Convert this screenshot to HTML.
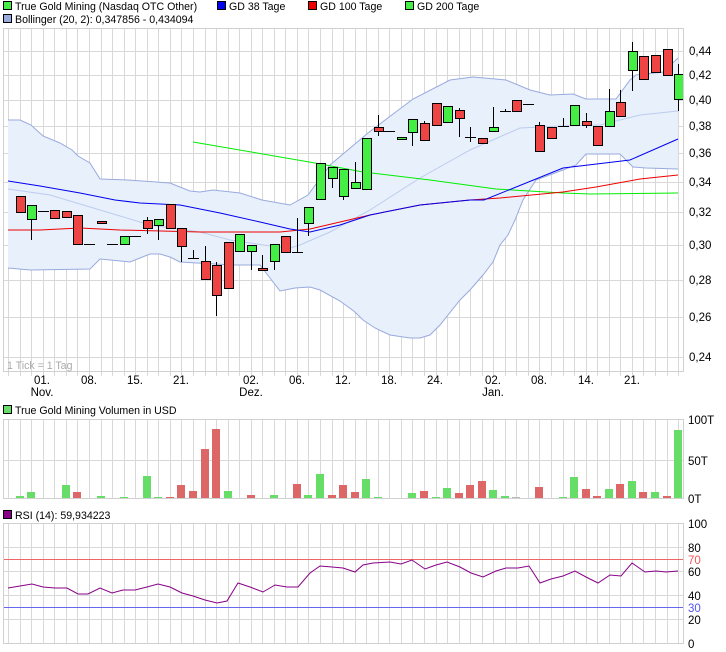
<!DOCTYPE html>
<html><head><meta charset="utf-8"><style>
html,body{margin:0;padding:0;background:#fff;width:726px;height:652px;overflow:hidden}
svg{display:block}
text{font-family:"Liberation Sans",sans-serif;font-size:11.5px;fill:#000}
text.lg{font-size:10.6px}
</style></head><body>
<svg id="s" width="726" height="652" viewBox="0 0 726 652" xmlns="http://www.w3.org/2000/svg">
<g id="grid" stroke="#d8d8d8" stroke-width="1" fill="none"></g>
<g id="ind"></g>
<g id="cand"></g>
<g id="vol"></g>
<g id="rsi"></g>
<rect x="3.5" y="28.5" width="680" height="343" fill="none" stroke="#d0d0d0"/>
<rect x="3.5" y="419.5" width="680" height="79" fill="none" stroke="#d0d0d0"/>
<rect x="3.5" y="523.5" width="680" height="120" fill="none" stroke="#d0d0d0"/>
<!-- legend -->
<rect x="3.5" y="1.5" width="8" height="8" fill="#44ee44" stroke="#000"/>
<text class="lg" x="15" y="10">True Gold Mining (Nasdaq OTC Other)</text>
<rect x="217.5" y="1.5" width="8" height="8" fill="#0000ee" stroke="#000"/>
<text class="lg" x="229" y="10">GD 38 Tage</text>
<rect x="308.5" y="1.5" width="8" height="8" fill="#ee0000" stroke="#000"/>
<text class="lg" x="320" y="10">GD 100 Tage</text>
<rect x="405.5" y="1.5" width="8" height="8" fill="#44ee44" stroke="#000"/>
<text class="lg" x="417" y="10">GD 200 Tage</text>
<rect x="3.5" y="14.5" width="8" height="8" fill="#99aadd" stroke="#000"/>
<text class="lg" x="15" y="23">Bollinger (20, 2): 0,347856 - 0,434094</text>
<text class="lg" x="7" y="369" style="fill:#aaa">1 Tick = 1 Tag</text>
<g>
<text x="689" y="55">0,44</text><text x="689" y="79">0,42</text><text x="689" y="104">0,40</text>
<text x="689" y="130">0,38</text><text x="689" y="157">0,36</text><text x="689" y="186">0,34</text>
<text x="689" y="216">0,32</text><text x="689" y="249">0,30</text><text x="689" y="284">0,28</text>
<text x="689" y="321">0,26</text><text x="689" y="361">0,24</text>
</g>
<g text-anchor="middle">
<text x="42" y="384">01.</text><text x="42" y="396">Nov.</text>
<text x="89" y="384">08.</text><text x="135" y="384">15.</text><text x="181" y="384">21.</text>
<text x="251" y="384">02.</text><text x="251" y="396">Dez.</text>
<text x="297" y="384">06.</text><text x="343" y="384">12.</text><text x="389" y="384">18.</text>
<text x="435" y="384">24.</text><text x="493" y="384">02.</text><text x="493" y="396">Jan.</text>
<text x="539" y="384">08.</text><text x="586" y="384">14.</text><text x="632" y="384">21.</text>
</g>
<rect x="3.5" y="405.5" width="8" height="8" fill="#66dd66" stroke="#000"/>
<text class="lg" x="15" y="414">True Gold Mining Volumen in USD</text>
<text x="688" y="424">100T</text><text x="688" y="465">50T</text><text x="688" y="503">0T</text>
<rect x="3.5" y="510.5" width="8" height="8" fill="#880088" stroke="#000"/>
<text class="lg" x="15" y="519">RSI (14): 59,934223</text>
<text x="688" y="528">100</text><text x="688" y="552">80</text><text x="688" y="564" style="fill:#ee5555">70</text>
<text x="688" y="576">60</text><text x="688" y="600">40</text><text x="688" y="612" style="fill:#5555ee">30</text>
<text x="688" y="624">20</text><text x="688" y="648">0</text>
</svg>
<script>
var NS="http://www.w3.org/2000/svg";
function el(p,t,a){var e=document.createElementNS(NS,t);for(var k in a)e.setAttribute(k,a[k]);document.getElementById(p).appendChild(e);return e;}
var g="grid";
for(var j=0;j<=58;j++){var x=Math.round(8.15+11.55*j)+0.5;
 el(g,"line",{x1:x,y1:28,x2:x,y2:376});el(g,"line",{x1:x,y1:419,x2:x,y2:499});el(g,"line",{x1:x,y1:523,x2:x,y2:643});}
[51,75,100,126,153,182,212,245,280,317,357].forEach(function(y){el(g,"line",{x1:3,y1:y+.5,x2:684,y2:y+.5});});
el(g,"line",{x1:3,y1:460.5,x2:684,y2:460.5});
[547,571,595,619].forEach(function(y){el(g,"line",{x1:3,y1:y+.5,x2:684,y2:y+.5});});
function pts(a){return a.map(function(p){return p.join(",")}).join(" ");}
var up=[[8,120],[20,120],[31,125],[43,136],[60,143],[72,150],[78,156],[90,163],[100,179],[128,180],[170,183],[190,191],[200,192],[213,190],[240,193],[262,200],[290,205],[308,195],[330,165],[368,133],[413,99],[450,80],[473,77],[506,80],[530,90],[550,95],[573,94],[586,99],[616,99],[630,80],[636,75],[663,72],[678,58]];
var lo=[[8,268],[30,270],[90,269],[100,259],[130,262],[150,254],[160,254],[170,257],[180,262],[232,265],[260,265],[280,291],[295,288],[310,287],[320,290],[340,301],[355,312],[363,320],[375,328],[390,335],[410,338],[420,338],[430,335],[440,325],[460,300],[470,290],[483,275],[493,262],[500,245],[508,235],[515,220],[523,200],[536,180],[563,170],[576,165],[586,154],[620,154],[633,167],[646,168],[678,169]];
var I="ind";
el(I,"polygon",{points:pts(up.concat(lo.slice().reverse())),fill:"#e8f0fc",stroke:"none"});
el(I,"polyline",{points:pts(up),fill:"none",stroke:"#99aadd"});
el(I,"polyline",{points:pts(lo),fill:"none",stroke:"#99aadd"});
el(I,"polyline",{points:pts([[8,189],[50,195],[100,210],[150,225],[200,232],[230,240],[270,246],[290,248],[300,245],[330,232],[370,210],[420,178],[470,150],[520,128],[560,126],[600,125],[640,115],[678,111]]),fill:"none",stroke:"#bbccee"});
el(I,"polyline",{points:pts([[193,142],[315,163],[363,172],[430,180],[496,189],[563,193],[590,194],[678,193]]),fill:"none",stroke:"#00ee00"});
el(I,"polyline",{points:pts([[8,230],[40,230],[80,228],[120,230],[200,232],[280,232],[310,229],[340,222],[370,215],[420,205],[470,200],[500,198],[563,192],[596,187],[640,179],[678,175]]),fill:"none",stroke:"#ee0000"});
el(I,"polyline",{points:pts([[8,181],[40,186],[80,193],[115,200],[140,203],[180,205],[220,213],[260,222],[290,229],[310,232],[340,225],[370,215],[420,205],[470,200],[484,200],[563,168],[630,160],[678,139]]),fill:"none",stroke:"#0000ee"});
var C=[[196,212,196,212,"r"],[205,219,205,240,"g"],[211,211,211,211,"d"],[210,218,210,218,"r"],[211,217,211,217,"r"],[215,244,215,244,"r"],[244,244,244,244,"d"],[221,223,221,223,"r"],[244,244,244,244,"d"],[236,244,236,244,"g"],[236,236,236,236,"d"],[220,228,217,234,"r"],[219,225,219,240,"g"],[204,228,204,228,"r"],[228,246,228,262,"r"],[258,258,250,258,"d"],[261,279,246,279,"r"],[265,295,262,316,"r"],[242,288,242,288,"r"],[234,251,234,251,"g"],[245,251,245,270,"g"],[268,270,255,270,"r"],[244,261,244,270,"g"],[236,252,236,252,"r"],[252,252,218,252,"d"],[207,223,207,236,"g"],[163,199,163,199,"g"],[167,178,167,188,"g"],[169,196,169,200,"g"],[182,188,162,188,"g"],[138,189,138,189,"g"],[127,131,115,136,"r"],[131,131,131,131,"d"],[137,139,137,139,"g"],[119,132,119,146,"g"],[123,140,121,140,"r"],[103,125,103,125,"r"],[106,122,106,122,"g"],[110,118,108,137,"r"],[137,137,127,142,"d"],[138,143,138,143,"r"],[127,131,107,131,"g"],[111,111,109,111,"d"],[100,111,100,111,"r"],[104,104,104,104,"d"],[125,151,122,151,"r"],[127,138,127,138,"r"],[126,126,118,126,"d"],[105,125,105,125,"g"],[121,125,113,128,"r"],[126,145,126,145,"r"],[111,126,89,126,"g"],[102,116,90,116,"r"],[51,70,42,91,"g"],[56,79,56,79,"r"],[55,72,55,72,"r"],[49,75,49,75,"r"],[74,99,64,111,"g"]];
C.forEach(function(c,k){var x=Math.round(19.7+11.55*k);
 if(c[2]<c[0]||c[3]>c[1])el("cand","line",{x1:x+.5,y1:c[2],x2:x+.5,y2:c[3],stroke:"#000"});
 if(c[4]=="d"){el("cand","line",{x1:x-5,y1:c[0]+.5,x2:x+6,y2:c[0]+.5,stroke:"#000"});}
 else{var h=Math.max(c[1]-c[0],2);el("cand","rect",{x:x-4+.5,y:c[0]+.5,width:9,height:h,fill:c[4]=="r"?"#ee4444":"#44ee44",stroke:"#000"});}
});
var V={0:[496,"g"],1:[492,"g"],3:[498,"r"],4:[485,"g"],5:[492,"r"],7:[496,"g"],9:[497,"g"],11:[476,"g"],12:[497,"g"],13:[497,"r"],14:[485,"r"],15:[491,"r"],16:[449,"r"],17:[429,"r"],18:[491,"g"],19:[498,"g"],20:[495,"r"],21:[498,"r"],22:[495,"g"],24:[484,"r"],25:[495,"g"],26:[474,"g"],27:[495,"r"],28:[485,"r"],29:[492,"r"],30:[479,"g"],31:[497,"g"],32:[498,"x"],33:[498,"r"],34:[493,"g"],35:[491,"r"],36:[497,"g"],37:[488,"g"],38:[493,"r"],39:[485,"r"],40:[481,"r"],41:[490,"g"],42:[496,"g"],43:[497,"x"],44:[498,"g"],45:[487,"r"],46:[498,"g"],47:[497,"g"],48:[477,"g"],49:[489,"r"],50:[496,"r"],51:[489,"g"],52:[484,"r"],53:[481,"g"],54:[492,"r"],55:[492,"g"],56:[496,"r"],57:[430,"g"]};
for(var k in V){var x=Math.round(19.7+11.55*k);var v=V[k];
 el("vol","rect",{x:x-4,y:v[0],width:8,height:499-v[0],fill:v[1]=="r"?"#dd6666":v[1]=="g"?"#66dd66":"#bbbbbb"});}
el("rsi","line",{x1:3,y1:559.5,x2:684,y2:559.5,stroke:"#ee6666"});
el("rsi","line",{x1:3,y1:607.5,x2:684,y2:607.5,stroke:"#6666ee"});
el("rsi","polyline",{points:pts([[8,588],[20,586],[32,584],[43,587],[55,588],[67,588],[78,594],[88,594],[100,588],[112,593],[123,590],[135,590],[147,587],[158,584],[170,587],[182,593],[193,596],[205,600],[217,603],[227,601],[238,583],[250,587],[263,592],[275,585],[287,587],[298,587],[310,573],[320,566],[332,567],[343,568],[355,572],[363,565],[373,563],[390,562],[401,564],[412,560],[425,569],[436,565],[447,562],[460,567],[471,573],[483,577],[496,571],[506,568],[518,568],[529,566],[540,583],[551,579],[563,576],[575,571],[586,577],[598,583],[610,575],[621,576],[632,563],[645,572],[656,571],[666,572],[678,571]]),fill:"none",stroke:"#880088"});
</script>
</body></html>
